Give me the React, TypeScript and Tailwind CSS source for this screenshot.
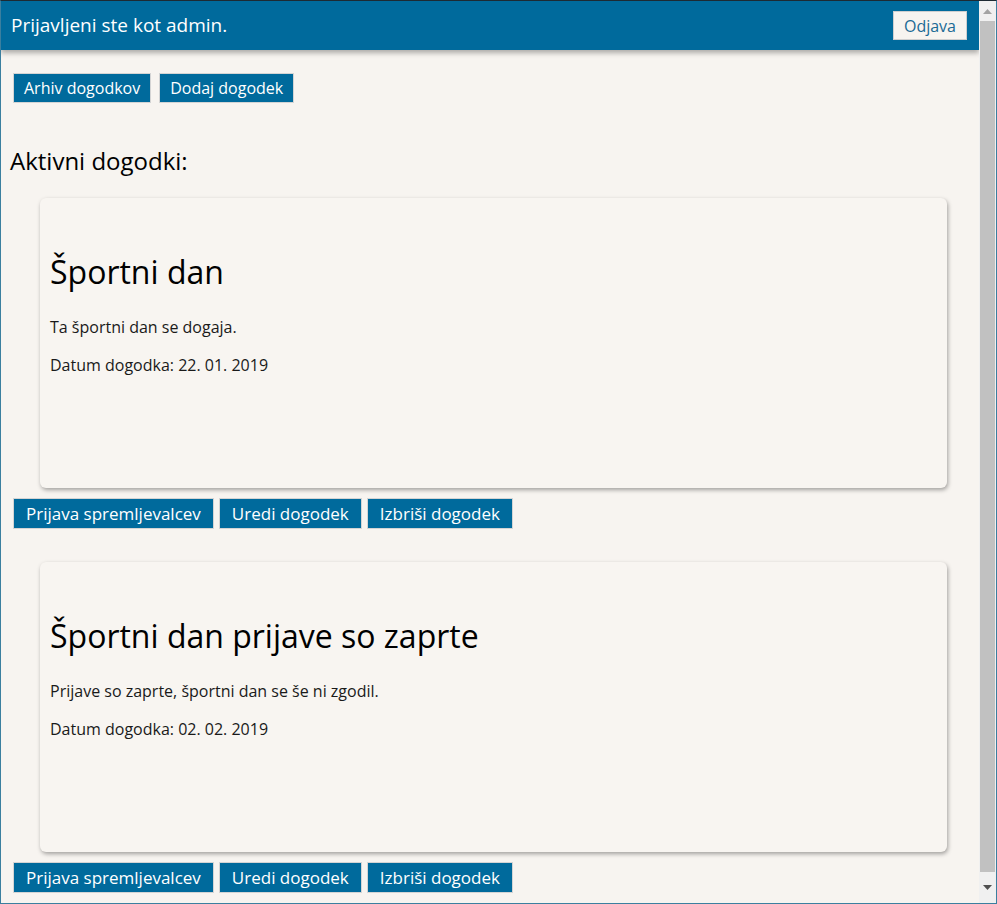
import React from 'react';

type Dogodek = {
  id: number;
  naslov: string;
  opis: string;
  datum: string;
};

const dogodki: Dogodek[] = [
  { id: 1, naslov: 'Športni dan', opis: 'Ta športni dan se dogaja.', datum: '22. 01. 2019' },
  {
    id: 2,
    naslov: 'Športni dan prijave so zaprte',
    opis: 'Prijave so zaprte, športni dan se še ni zgodil.',
    datum: '02. 02. 2019',
  },
];

const Gumb = ({ children, big }: { children: React.ReactNode; big?: boolean }) => (
  <button
    type="button"
    className={
      big
        ? 'h-[31px] border border-[#d4d4d4] bg-[#006a9c] px-[12px] text-[17px] leading-none text-white'
        : 'h-[30px] border border-[#d4d4d4] bg-[#006a9c] px-[10px] text-[16px] leading-none text-white'
    }
  >
    {children}
  </button>
);

const Kartica = ({ d }: { d: Dogodek }) => (
  <div className="flex flex-col">
    <div className="ml-[39px] h-[290px] w-[907px] rounded-[6px] bg-[#f8f5f1] px-[10px] pt-[54px] shadow-[1px_2px_4px_rgba(0,0,0,0.35)]">
      <h1 className="text-[32px] leading-[40px] text-black">{d.naslov}</h1>
      <p className="mt-[25px] text-[16px] leading-[20px] text-[#1a1a1a]">{d.opis}</p>
      <p className="mt-[18px] text-[16px] leading-[20px] text-[#1a1a1a]">Datum dogodka: {d.datum}</p>
    </div>
    <div className="mt-[10px] flex gap-[5px] pl-[12px]">
      <Gumb big>Prijava spremljevalcev</Gumb>
      <Gumb big>Uredi dogodek</Gumb>
      <Gumb big>Izbriši dogodek</Gumb>
    </div>
  </div>
);

const Drsnik = () => (
  <div className="flex w-[17px] shrink-0 flex-col bg-[#f0f0f0]">
    <div className="flex h-[20px] items-center justify-center">
      <svg width="9" height="5" viewBox="0 0 9 5">
        <path d="M4.5 0 L9 5 L0 5 Z" fill="#a3a3a3" />
      </svg>
    </div>
    <div className="mx-[1px] h-[851px] bg-[#c1c1c1]" />
    <div className="flex flex-1 items-center justify-center">
      <svg width="9" height="5" viewBox="0 0 9 5">
        <path d="M0 0 L9 0 L4.5 5 Z" fill="#505050" />
      </svg>
    </div>
  </div>
);

export default function App() {
  return (
    <div
      className="flex h-[904px] w-[997px] overflow-hidden border border-[#3b7f9f] border-t-[#1d2a33] bg-[#f7f4f0]"
      style={{ fontFamily: '"Open Sans", "Noto Sans", sans-serif' }}
    >
      <div className="flex min-w-0 flex-1 flex-col">
        <header className="flex h-[49px] shrink-0 items-center justify-between bg-[#006a9c] pl-[10px] pr-[12px] shadow-[0_3px_5px_rgba(0,0,0,0.3)]">
          <span className="text-[19px] text-white">Prijavljeni ste kot admin.</span>
          <button
            type="button"
            className="h-[29px] border border-[#cfcfcf] bg-[#f7f4f0] px-[10px] text-[16px] leading-none text-[#1b6a95]"
          >
            Odjava
          </button>
        </header>
        <div className="mt-[23px] flex gap-[8px] pl-[12px]">
          <Gumb>Arhiv dogodkov</Gumb>
          <Gumb>Dodaj dogodek</Gumb>
        </div>
        <h2 className="mt-[43px] pl-[9px] text-[24px] leading-[30px] text-black">Aktivni dogodki:</h2>
        <div className="mt-[22px] flex flex-col gap-[33px]">
          {dogodki.map((d) => (
            <Kartica key={d.id} d={d} />
          ))}
        </div>
      </div>
      <Drsnik />
    </div>
  );
}
